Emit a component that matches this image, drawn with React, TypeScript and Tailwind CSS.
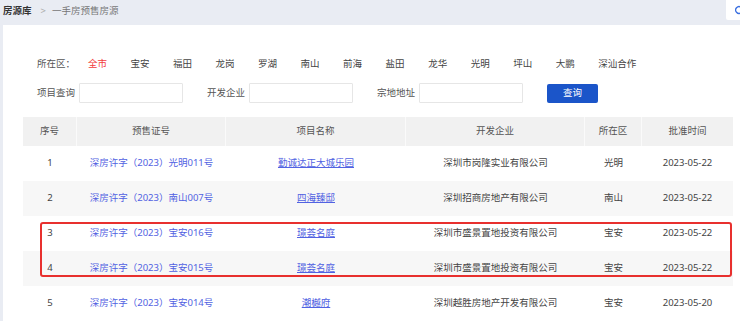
const DISTRICTS = [
  "全市",
  "宝安",
  "福田",
  "龙岗",
  "罗湖",
  "南山",
  "前海",
  "盐田",
  "龙华",
  "光明",
  "坪山",
  "大鹏",
  "深汕合作",
];

const ROWS = [
  { no: "1", cert: "深房许字（2023）光明011号", name: "勤诚达正大城乐园", dev: "深圳市岗隆实业有限公司", area: "光明", date: "2023-05-22" },
  { no: "2", cert: "深房许字（2023）南山007号", name: "四海臻邸", dev: "深圳招商房地产有限公司", area: "南山", date: "2023-05-22" },
  { no: "3", cert: "深房许字（2023）宝安016号", name: "璟荟名庭", dev: "深圳市盛景置地投资有限公司", area: "宝安", date: "2023-05-22" },
  { no: "4", cert: "深房许字（2023）宝安015号", name: "璟荟名庭", dev: "深圳市盛景置地投资有限公司", area: "宝安", date: "2023-05-22" },
  { no: "5", cert: "深房许字（2023）宝安014号", name: "潮樾府", dev: "深圳越胜房地产开发有限公司", area: "宝安", date: "2023-05-20" },
];

const HEADERS = ["序号", "预售证号", "项目名称", "开发企业", "所在区", "批准时间"];

export default function App() {
  return (
    <div
      className="relative w-[740px] h-[321px] overflow-hidden bg-[#e9ecf3] text-[9.5px] text-[#444]"
      style={{ fontFamily: '"Noto Sans", "Noto Sans CJK SC", sans-serif' }}
    >
      {/* Breadcrumb */}
      <div className="h-[25px] flex items-center pl-[3px] pb-[2px]">
        <span className="font-bold text-[#333]">房源库</span>
        <span className="ml-[9px] mr-[6px] text-[#aaa]">&gt;</span>
        <span className="text-[#777]">一手房预售房源</span>
      </div>

      {/* Right side tab */}
      <div className="absolute top-0 left-[726px] w-[20px] h-[20px] bg-white rounded-bl-[2px] flex items-center pl-[9px]">
        <svg width="8" height="10" viewBox="0 0 8 10">
          <path d="M6 2.2 A3.4 3.4 0 1 0 6 7.8" fill="none" stroke="#3a6fe0" strokeWidth="1.3" />
        </svg>
      </div>

      {/* Content */}
      <div className="ml-[3px] bg-white h-[296px]">
        {/* District filter */}
        <div className="flex items-center pl-[34px] pt-[32px] h-[46px]">
          <span className="text-[#555] w-[51px]">所在区：</span>
          <div className="flex gap-[23.5px]">
            {DISTRICTS.map((d, i) => (
              <span key={d} className={i === 0 ? "text-[#f23c3c]" : "text-[#444]"}>
                {d}
              </span>
            ))}
          </div>
        </div>

        {/* Search inputs */}
        <div className="flex items-center pl-[34px] mt-[12px] h-[20px]">
          {["项目查询", "开发企业", "宗地地址"].map((l) => (
            <div key={l} className="flex items-center mr-[24px]">
              <span className="text-[#555]">{l}</span>
              <div className="ml-[4px] w-[104px] h-[20px] border border-[#e6e6e6] rounded-[1px]" />
            </div>
          ))}
          <button className="w-[51px] h-[19px] bg-[#1b55c9] text-white rounded-[2px] flex items-center justify-center">
            查询
          </button>
        </div>

        {/* Table */}
        <div className="ml-[20px] mt-[14px] w-[710px]">
          <div className="grid grid-cols-[54px_149px_180px_179px_57px_91px] h-[29px] bg-[#f1f1f1] text-[#555]">
            {HEADERS.map((h, i) => (
              <div
                key={h}
                className={`flex items-center justify-center ${i < 5 ? "border-r border-[#fafafa]" : ""}`}
              >
                {h}
              </div>
            ))}
          </div>
          {ROWS.map((r, i) => (
            <div
              key={r.no}
              className={`grid grid-cols-[54px_149px_180px_179px_57px_91px] h-[35px] ${i % 2 === 1 ? "bg-[#f7f7f7]" : "bg-white"}`}
            >
              <div className="flex items-center justify-center">{r.no}</div>
              <div className="flex items-center justify-center text-[#5162e2]">{r.cert}</div>
              <div className="flex items-center justify-center text-[#5162e2] underline underline-offset-1">{r.name}</div>
              <div className="flex items-center justify-center">{r.dev}</div>
              <div className="flex items-center justify-center">{r.area}</div>
              <div className="flex items-center justify-center">{r.date}</div>
            </div>
          ))}
        </div>
      </div>

      {/* Highlight annotation */}
      <div className="absolute left-[40px] top-[222px] w-[692px] h-[55px] border-2 border-[#e8302e] rounded-[3px]" />
    </div>
  );
}
